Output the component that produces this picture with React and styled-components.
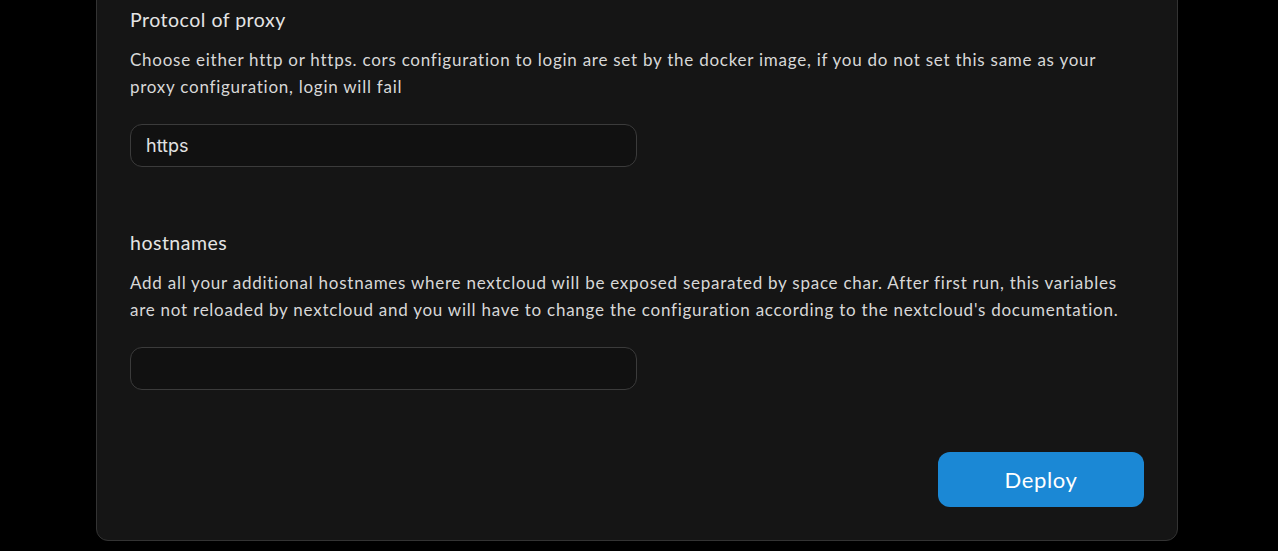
import React from "react";
import styled, { createGlobalStyle } from "styled-components";

const Global = createGlobalStyle`
    html, body {
        margin: 0;
        padding: 0;
        background: #000;
    }
    * {
        box-sizing: border-box;
    }
`
const Page = styled.div`
    height: 100vh;
    overflow: hidden;
    display: flex;
    flex-direction: column;
    justify-content: flex-end;
    padding: 0 100px 10px 96px;
    font-family: "Lato", "Open Sans", sans-serif;
`
const Card = styled.div`
    flex-shrink: 0;
    background: #151515;
    border: 1px solid #333;
    border-radius: 12px;
    padding: 34px 33px 33px 33px;
    display: flex;
    flex-direction: column;
`
const Field = styled.div`
    display: flex;
    flex-direction: column;
    margin-bottom: ${(p) => p.$gap || 0}px;
`
const Label = styled.div`
    color: #e4e4e4;
    font-size: 19.5px;
    letter-spacing: 0.5px;
    line-height: 24px;
    margin-bottom: 14px;
`
const Help = styled.p`
    margin: 0 0 24px 0;
    color: #d8d8d8;
    font-size: 17px;
    letter-spacing: 0.75px;
    line-height: 27px;
`
const Input = styled.input`
    width: 507px;
    height: 43px;
    background: #111;
    border: 1px solid #3b3b3b;
    border-radius: 12px;
    padding: 0 15px;
    color: #e2e2e2;
    font-family: "Inter", "Roboto", sans-serif;
    font-size: 18px;
    outline: none;
`
const Actions = styled.div`
    display: flex;
    justify-content: flex-end;
`
const Button = styled.button`
    width: 206px;
    height: 55px;
    border: none;
    border-radius: 12px;
    background: #1b88d5;
    color: #fff;
    font-family: "Lato", "Open Sans", sans-serif;
    font-size: 22px;
    letter-spacing: 0.6px;
    cursor: pointer;
`

export default function App(){
    return(
        <Page>
            <Global/>
            <Card>
                <Field $gap={64}>
                    <Label>Protocol of proxy</Label>
                    <Help>
                        Choose either http or https. cors configuration to login are set by the docker image, if you do not set this same as your proxy configuration, login will fail
                    </Help>
                    <Input defaultValue="https" />
                </Field>
                <Field $gap={62}>
                    <Label>hostnames</Label>
                    <Help>
                        Add all your additional hostnames where nextcloud will be exposed separated by space char. After first run, this variables are not reloaded by nextcloud and you will have to change the configuration according to the nextcloud's documentation.
                    </Help>
                    <Input defaultValue="" />
                </Field>
                <Actions>
                    <Button>Deploy</Button>
                </Actions>
            </Card>
        </Page>
    )
}
